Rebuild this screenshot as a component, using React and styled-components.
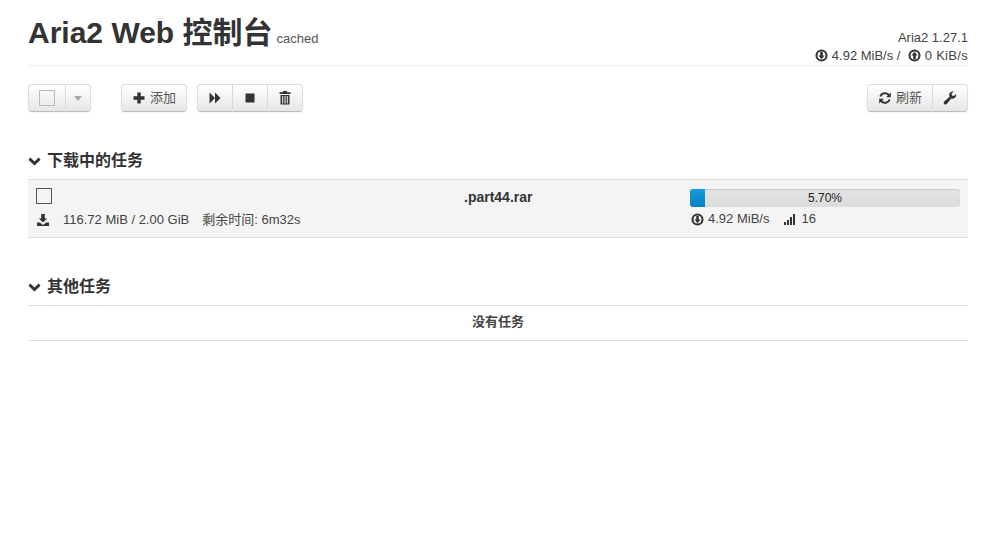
import React from 'react';
import styled, { createGlobalStyle } from 'styled-components';

const Global = createGlobalStyle`
  html, body { margin: 0; padding: 0; background: #fff; }
  body {
    font-family: "Liberation Sans", "Noto Sans CJK SC", sans-serif;
    font-size: 13px;
    line-height: 18px;
    color: #333;
  }
`;

const Page = styled.div`
  padding: 0 28px;
  height: 559px;
  box-sizing: border-box;
  overflow: hidden;
`;

const Header = styled.header`
  display: flex;
  justify-content: space-between;
  height: 65px;
  border-bottom: 1px solid #eee;
`;

const Title = styled.h1`
  margin: 14px 0 0;
  font-size: 30px;
  line-height: 38px;
  font-weight: bold;
  color: #333;
`;

const Small = styled.small`
  margin-left: 4px;
  font-size: 13px;
  font-weight: normal;
  color: #555;
`;

const Status = styled.div`
  margin-top: 29px;
  text-align: right;
  line-height: 18px;
  color: #444;
`;

const UpSpeed = styled.span`
  letter-spacing: 0.3px;
`;

const Toolbar = styled.div`
  display: flex;
  margin-top: 18px;
`;

const Group = styled.div`
  display: flex;
  margin-right: ${p => p.$gap ?? 10}px;
  margin-left: ${p => (p.$right ? 'auto' : 0)};
`;

const Btn = styled.button`
  display: flex;
  align-items: center;
  justify-content: center;
  gap: 4px;
  width: ${p => p.$w}px;
  height: 28px;
  padding: 0;
  font: inherit;
  color: #555;
  background: linear-gradient(#fff, #e6e6e6);
  border: 1px solid #ddd;
  border-bottom-color: #bbb;
  border-left-width: ${p => (p.$first ? 1 : 0)}px;
  border-radius: ${p => (p.$first ? '4px' : 0)} ${p => (p.$last ? '4px 4px' : '0 0')} ${p => (p.$first ? '4px' : 0)};
  box-shadow: inset 0 1px 0 rgba(255, 255, 255, 0.2), 0 1px 2px rgba(0, 0, 0, 0.05);
`;

const BoxMark = styled.span`
  display: block;
  box-sizing: border-box;
  width: 16px;
  height: 16px;
  border: 1px solid ${p => (p.$dark ? '#555' : '#bbb')};
`;

const Caret = styled.span`
  width: 0;
  height: 0;
  margin-top: 1px;
  border-left: 4px solid transparent;
  border-right: 4px solid transparent;
  border-top: 5px solid #aaa;
`;

const Section = styled.section`
  margin-top: ${p => p.$top}px;
`;

const SectionHead = styled.h4`
  display: flex;
  align-items: center;
  gap: 6px;
  margin: 0 0 8px;
  height: 20px;
  font-size: 16px;
  line-height: 20px;
  font-weight: bold;
  color: #333;
`;

const TaskRow = styled.div`
  display: grid;
  grid-template-columns: 360px 292px 1fr;
  height: 57px;
  padding: 0 8px;
  background: #f4f4f4;
  border-top: 1px solid #ddd;
  border-bottom: 1px solid #ddd;
`;

const Col = styled.div`
  display: flex;
  flex-direction: column;
`;

const Line = styled.div`
  display: flex;
  align-items: center;
  height: 18px;
  margin-top: ${p => p.$top || 0}px;
  white-space: pre;
  color: #444;
`;

const Stat = styled.span`
  margin-left: ${p => p.$ml || 0}px;
`;

const FileName = styled.div`
  margin-top: 8px;
  padding-left: 68px;
  font-weight: bold;
  font-size: 14px;
  line-height: 18px;
  color: #333;
`;

const ProgressCol = styled(Col)`
  padding-left: 2px;
`;

const Progress = styled.div`
  position: relative;
  box-sizing: border-box;
  width: 270px;
  height: 18px;
  margin-top: 9px;
  border-radius: 3px;
  overflow: hidden;
  text-align: center;
  font-size: 12px;
  line-height: 18px;
  color: #222;
  background: linear-gradient(#e4e4e4, #dcdcdc);
  box-shadow: inset 0 1px 1px rgba(0, 0, 0, 0.12);
`;

const Bar = styled.div`
  position: absolute;
  left: 0;
  top: 0;
  bottom: 0;
  background: linear-gradient(#149bdf, #0480be);
`;

const ProgressText = styled.span`
  position: relative;
`;

const Empty = styled.div`
  height: 34px;
  border-top: 1px solid #ddd;
  border-bottom: 1px solid #ddd;
  text-align: center;
  line-height: 32px;
  font-weight: bold;
  color: #444;
`;

const Icon = styled.svg`
  flex: none;
  width: ${p => p.$s || 14}px;
  height: ${p => p.$s || 14}px;
  fill: #333;
  vertical-align: -2px;
  margin-left: ${p => p.$ml || 0}px;
  margin-right: ${p => p.$mr || 0}px;
`;

const SpeedIcon = ({ up, ml, mr }) => (
  <Icon viewBox="0 0 14 14" $s={13} $ml={ml} $mr={mr}>
    <path
      fillRule="evenodd"
      d="M7 .5a6.500 6.500 0 1 0 0 13 6.500 6.500 0 0 0 0-13zm0 2.200a4.300 4.300 0 1 1 0 8.600 4.300 4.300 0 0 1 0-8.600z"
    />
    <path d={up ? 'M7 3 10.300 7H8.400v3.800H5.600V7H3.700z' : 'M7 11 3.700 7h1.900V3.200h2.800V7h1.900z'} />
  </Icon>
);

const Plus = () => (
  <Icon viewBox="0 0 14 14">
    <path d="M5.300 1.500h3.400v3.800h3.800v3.400H8.700v3.800H5.300V8.700H1.500V5.300h3.800z" />
  </Icon>
);
const Forward = () => (
  <Icon viewBox="0 0 14 14">
    <path d="M1.500 1.500 7 7l-5.500 5.500zM7 1.500 12.500 7 7 12.500z" />
  </Icon>
);
const Stop = () => (
  <Icon viewBox="0 0 14 14">
    <rect x="2.500" y="2.500" width="9" height="9" />
  </Icon>
);
const Trash = () => (
  <Icon viewBox="0 0 14 14">
    <path
      fillRule="evenodd"
      d="M5.200 0h3.600l.5 1.300H12.500v1.700h-11V1.300h3.200zM2.500 4h9v9.500h-9zM4.200 5v7.500h1V5zm2.300 0v7.500h1V5zm2.300 0v7.500h1V5z"
    />
  </Icon>
);
const Refresh = () => (
  <Icon viewBox="0 0 14 14">
    <path d="M7 1.200a5.800 5.800 0 0 1 4.200 1.800L12.800 1.500v4.700H8.100l1.700-1.700A3.900 3.900 0 0 0 3.300 5.800L1.400 5.300A5.800 5.800 0 0 1 7 1.200zM1.200 7.800h4.700L4.200 9.500a3.900 3.900 0 0 0 6.500-1.300l1.900.5A5.800 5.800 0 0 1 2.800 11l-1.600 1.500z" />
  </Icon>
);
const Wrench = () => (
  <Icon viewBox="0 0 14 14">
    <path d="M13.200 3.800a3.800 3.800 0 0 1-5 3.700L3.700 12.900a1.700 1.700 0 0 1-2.500-2.400l5.400-4.700A3.800 3.800 0 0 1 10.700.4L8.600 2.600l.4 2 2 .5 2-2.200c.1.300.2.600.2.900z" />
  </Icon>
);
const Chevron = () => (
  <Icon viewBox="0 0 14 14" $s={13}>
    <path d="M2.500 2.800 7 7l4.500-4.200L13.500 5 7 11.200.5 5z" />
  </Icon>
);
const Download = () => (
  <Icon viewBox="0 0 14 14" $mr={2}>
    <path d="M5.200 1h3.600v4.500h2.400L7 9.600 2.800 5.500h2.400zM1 9.500h2.800L7 12l3.200-2.500H13V13H1z" />
  </Icon>
);
const Signal = () => (
  <Icon viewBox="0 0 12 12" $s={12} $ml={15} $mr={5}>
    <path d="M0 9h2v3H0zM3 7h2v5H3zM6 4h2v8H6zM9 1h2v11H9z" />
  </Icon>
);

export default function App() {
  return (
    <Page>
      <Global />
      <Header>
        <Title>
          Aria2 Web 控制台<Small>cached</Small>
        </Title>
        <Status>
          <div>Aria2 1.27.1</div>
          <div>
            <SpeedIcon /> 4.92 MiB/s / <SpeedIcon up ml={4} /> <UpSpeed>0 KiB/s</UpSpeed>
          </div>
        </Status>
      </Header>

      <Toolbar>
        <Group $gap={30}>
          <Btn $first $w={38}><BoxMark /></Btn>
          <Btn $last $w={25}><Caret /></Btn>
        </Group>
        <Group>
          <Btn $first $last $w={66}><Plus /> 添加</Btn>
        </Group>
        <Group>
          <Btn $first $w={36}><Forward /></Btn>
          <Btn $w={35}><Stop /></Btn>
          <Btn $last $w={35}><Trash /></Btn>
        </Group>
        <Group $right $gap={0}>
          <Btn $first $w={66}><Refresh /> 刷新</Btn>
          <Btn $last $w={35}><Wrench /></Btn>
        </Group>
      </Toolbar>

      <Section $top={39}>
        <SectionHead><Chevron /> 下载中的任务</SectionHead>
        <TaskRow>
          <Col>
            <Line $top={7}><BoxMark $dark /></Line>
            <Line $top={6}>
              <Download />
              <Stat $ml={11}>116.72 MiB / 2.00 GiB</Stat>
              <Stat $ml={13}>剩余时间: 6m32s</Stat>
            </Line>
          </Col>
          <FileName>.part44.rar</FileName>
          <ProgressCol>
            <Progress>
              <Bar style={{ width: '5.7%' }} />
              <ProgressText>5.70%</ProgressText>
            </Progress>
            <Line $top={3}>
              <SpeedIcon ml={1} />
              <Stat $ml={4}>4.92 MiB/s</Stat>
              <Signal />
              <Stat>16</Stat>
            </Line>
          </ProgressCol>
        </TaskRow>
      </Section>

      <Section $top={39}>
        <SectionHead><Chevron /> 其他任务</SectionHead>
        <Empty>没有任务</Empty>
      </Section>
    </Page>
  );
}
